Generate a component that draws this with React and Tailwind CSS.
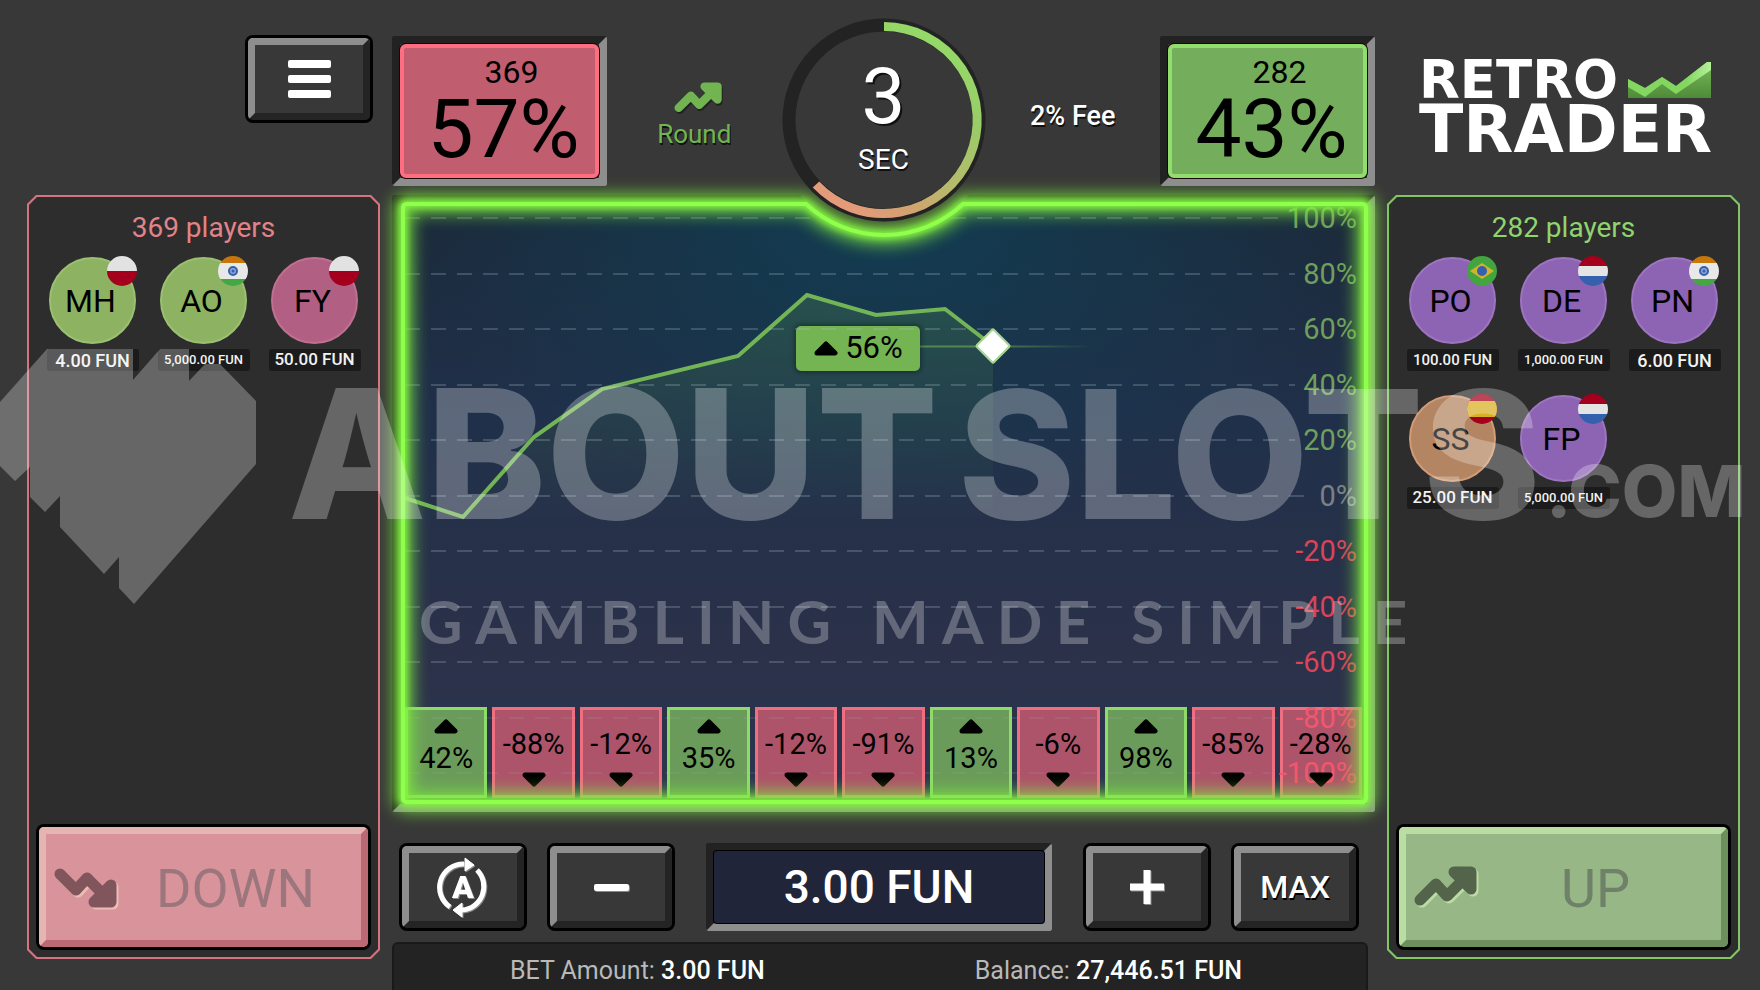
import { useId } from "react";

const DOWN_PLAYERS = [
  { initials: "MH", bet: "4.00 FUN", flag: "pl", color: "bg-[#8db262] border-[#9cc071]", size: "text-[18px]" },
  { initials: "AO", bet: "5,000.00 FUN", flag: "in", color: "bg-[#8db262] border-[#9cc071]", size: "text-[13px]" },
  { initials: "FY", bet: "50.00 FUN", flag: "pl", color: "bg-[#b16083] border-[#bf7091]", size: "text-[17px]" },
];

const UP_PLAYERS = [
  { initials: "PO", bet: "100.00 FUN", flag: "br", color: "bg-[#8d63b3] border-[#9d74c0]", size: "text-[15px]" },
  { initials: "DE", bet: "1,000.00 FUN", flag: "nl", color: "bg-[#8d63b3] border-[#9d74c0]", size: "text-[13px]" },
  { initials: "PN", bet: "6.00 FUN", flag: "in", color: "bg-[#8d63b3] border-[#9d74c0]", size: "text-[18px]" },
  { initials: "SS", bet: "25.00 FUN", flag: "es", color: "bg-[#b38562] border-[#d09b76]", size: "text-[17px]" },
  { initials: "FP", bet: "5,000.00 FUN", flag: "nl", color: "bg-[#8d63b3] border-[#9d74c0]", size: "text-[13px]" },
];

const HISTORY = [42, -88, -12, 35, -12, -91, 13, -6, 98, -85, -28];

const AXIS = [100, 80, 60, 40, 20, 0, -20, -40, -60, -80, -100];

const KEY =
  "m-[3px] flex h-[82px] w-[122px] shrink-0 items-center justify-center rounded-[5px] border-[7px] border-t-[#8e8e8e] border-r-[#242424] border-b-[#242424] border-l-[#8e8e8e] bg-[#383838] shadow-[0_0_0_3px_#000]";

const FRAME = "border-8 border-t-[#222222] border-r-[#8e8e8e] border-b-[#8e8e8e] border-l-[#222222]";

function Flag({ code }) {
  const id = useId();
  return (
    <svg viewBox="0 0 30 30" className="absolute -top-[3px] -right-[3px] size-[30px]" aria-hidden="true">
      <clipPath id={id}>
        <circle cx="15" cy="15" r="15" />
      </clipPath>
      <g clipPath={`url(#${id})`}>
        {code === "pl" && (
          <>
            <rect width="30" height="15" fill="#e2e2e2" />
            <rect y="15" width="30" height="15" fill="#a4001d" />
          </>
        )}
        {code === "nl" && (
          <>
            <rect width="30" height="10" fill="#a4001d" />
            <rect y="10" width="30" height="10" fill="#e4e4e4" />
            <rect y="20" width="30" height="10" fill="#3560ad" />
          </>
        )}
        {code === "in" && (
          <>
            <rect width="30" height="7" fill="#c7760c" />
            <rect y="7" width="30" height="16" fill="#e8e8e8" />
            <rect y="23" width="30" height="7" fill="#43a843" />
            <circle cx="15" cy="15" r="4" fill="#8aa5d6" stroke="#3560ad" strokeWidth="2" />
            <circle cx="15" cy="15" r="1.5" fill="#3560ad" />
          </>
        )}
        {code === "br" && (
          <>
            <rect width="30" height="30" fill="#43a53f" />
            <path d="M3 15 15 7l12 8-12 8z" fill="#d3b32c" />
            <circle cx="15" cy="15" r="5" fill="#3560ad" />
          </>
        )}
        {code === "es" && (
          <>
            <rect width="30" height="30" fill="#a4001d" />
            <rect y="7" width="30" height="16" fill="#d8b022" />
          </>
        )}
      </g>
    </svg>
  );
}

function TrendArrow({ className }) {
  return (
    <svg viewBox="0 0 64 42" className={className} fill="none" stroke="currentColor" strokeLinejoin="round" aria-hidden="true">
      <path d="M6 34 22 18 33 30 49 14" strokeWidth="11" strokeLinecap="round" />
      <path d="M40 6H57V23Z" fill="currentColor" strokeWidth="11" />
    </svg>
  );
}

function Triangle({ down, className = "h-[15px] w-6" }) {
  return (
    <svg viewBox="0 0 24 15" className={className} aria-hidden="true">
      <path
        d={down ? "M3 3 12 12 21 3Z" : "M3 12 12 3 21 12Z"}
        fill="black"
        stroke="black"
        strokeWidth="5"
        strokeLinejoin="round"
      />
    </svg>
  );
}

function PlayerPanel({ count, players, up }) {
  return (
    <aside
      className={`mb-[31px] flex p-[2px] [clip-path:polygon(9px_0,calc(100%_-_9px)_0,100%_9px,100%_calc(100%_-_9px),calc(100%_-_9px)_100%,9px_100%,0_calc(100%_-_9px),0_9px)] ${
        up ? "bg-[#83c565]" : "bg-[#d5737f]"
      }`}
    >
      <div className="flex flex-1 flex-col bg-[#2d2d2d] px-[10px] pt-[15px] pb-[10px] [clip-path:polygon(8px_0,calc(100%_-_8px)_0,100%_8px,100%_calc(100%_-_8px),calc(100%_-_8px)_100%,8px_100%,0_calc(100%_-_8px),0_8px)]">
        <h2 className={`text-center text-[28px] leading-8 ${up ? "text-[#8fd46f]" : "text-[#e28389]"}`}>
          {count} players
        </h2>
        <ul className="mt-[13px] -mx-[2px] grid grid-cols-3 gap-y-6">
          {players.map((p) => (
            <li key={p.initials} className="flex flex-col items-center gap-[5px]">
              <div
                className={`relative flex size-[87px] items-center justify-center rounded-full border-2 pr-1 text-[32px] text-black ${p.color}`}
              >
                {p.initials}
                <Flag code={p.flag} />
              </div>
              <span
                className={`flex h-[22px] w-[92px] items-center justify-center rounded-[3px] bg-[#1b1b1b] font-medium whitespace-nowrap text-[#f2f2f2] ${p.size}`}
              >
                {p.bet}
              </span>
            </li>
          ))}
        </ul>
        <button
          type="button"
          className={`mt-auto flex h-[120px] items-center rounded-[5px] border-[7px] px-2 shadow-[0_0_0_3px_#000] ${
            up
              ? "border-t-[#b9dda3] border-r-[#6d8f5b] border-b-[#6d8f5b] border-l-[#b9dda3] bg-[#97b786] text-[#6f8168]"
              : "border-t-[#e5b6b1] border-r-[#bb6a74] border-b-[#bb6a74] border-l-[#e5b6b1] bg-[#d9939a] text-[#9b777d]"
          }`}
        >
          <TrendArrow
            className={
              up
                ? "h-[42px] w-16 text-[#54644b] drop-shadow-[2px_2px_0_#bbdca6]"
                : "h-[42px] w-16 -scale-y-100 text-[#80555c] drop-shadow-[2px_-2px_0_#ecbdb6]"
            }
          />
          <span className="flex-1 pt-1 text-center text-[54px] leading-none">{up ? "UP" : "DOWN"}</span>
        </button>
      </div>
    </aside>
  );
}

function ShareTile({ count, percent, up }) {
  return (
    <div className={`flex h-[150px] rounded-[3px] ${FRAME}`}>
      <div
        className={`flex flex-1 flex-col items-center rounded-[6px] border-4 text-black shadow-[0_0_0_1px_#1a0509] ${
          up ? "border-[#92de6c] bg-[#74ad5b]" : "border-[#ff6d81] bg-[#c05d6f]"
        }`}
      >
        <span className="mt-2 ml-6 text-[32px] leading-8">{count}</span>
        <span className="ml-2 text-[82px] leading-[82px]">{percent}%</span>
      </div>
    </div>
  );
}

function Timer() {
  return (
    <div className="relative mt-[18px] size-[204px]">
      <svg viewBox="0 0 204 204" className="absolute inset-0" fill="none" aria-hidden="true">
        <defs>
          <linearGradient id="timer-arc" gradientUnits="userSpaceOnUse" x1="150" y1="10" x2="50" y2="185">
            <stop offset="0" stopColor="#93db68" />
            <stop offset="0.3" stopColor="#9acc68" />
            <stop offset="0.65" stopColor="#b8b96c" />
            <stop offset="0.85" stopColor="#d3a170" />
            <stop offset="1" stopColor="#e69a7c" />
          </linearGradient>
        </defs>
        <circle cx="102" cy="102" r="95" fill="#383838" stroke="#232323" strokeWidth="13" />
        <path d="M102 8.5A93.5 93.5 0 1 1 34 166.5" stroke="url(#timer-arc)" strokeWidth="9" />
      </svg>
      <div className="relative flex flex-col items-center text-white">
        <span className="mt-10 text-[78px] leading-[78px] [text-shadow:2px_2px_0_#111]">3</span>
        <span className="mt-2 text-[28px] leading-8 [text-shadow:1px_2px_0_#111]">SEC</span>
      </div>
    </div>
  );
}

function Logo() {
  return (
    <div className="ml-[32px] w-[292px] pt-[58px] font-['DejaVu_Sans'] font-bold text-white">
      <div className="flex items-center justify-between">
        <span className="text-[53px] leading-[44px]">RETRO</span>
        <svg viewBox="0 0 83 36" className="h-9 w-[83px] shrink-0" aria-hidden="true">
          <defs>
            <linearGradient id="logo-area" x1="0" y1="0" x2="0" y2="1">
              <stop offset="0" stopColor="#79bd58" />
              <stop offset="1" stopColor="#4f8a3a" />
            </linearGradient>
            <linearGradient id="logo-band" x1="0" y1="0" x2="1" y2="0">
              <stop offset="0.7" stopColor="#83d660" />
              <stop offset="1" stopColor="#b5f09b" />
            </linearGradient>
          </defs>
          <path d="M0 17 17 26 34 15 48 24 79 0H83V36H0Z" fill="url(#logo-area)" />
          <path d="M0 17 17 26 34 15 48 24 79 0H83V8L48 32 34 22 17 35 0 25Z" fill="url(#logo-band)" />
        </svg>
      </div>
      <div className="text-[65px] leading-[56px]">TRADER</div>
    </div>
  );
}

function Chart() {
  return (
    <section className={`relative flex flex-1 flex-col justify-end rounded-[3px] ${FRAME}`}>
      <svg
        viewBox="0 0 983 617"
        preserveAspectRatio="none"
        className="absolute -top-2 -left-2 h-[calc(100%_+_16px)] w-[calc(100%_+_16px)]"
        fill="none"
        aria-hidden="true"
      >
        <defs>
          <linearGradient id="sky" x1="0" y1="0" x2="0" y2="1">
            <stop offset="0" stopColor="#1c2939" />
            <stop offset="0.35" stopColor="#20304a" />
            <stop offset="0.75" stopColor="#2b3149" />
            <stop offset="1" stopColor="#2b3650" />
          </linearGradient>
          <radialGradient id="haze" cx="0.5" cy="0.02" r="0.5">
            <stop offset="0" stopColor="#123d53" />
            <stop offset="1" stopColor="#123d53" stopOpacity="0" />
          </radialGradient>
          <linearGradient id="area" x1="0" y1="0" x2="0" y2="1">
            <stop offset="0" stopColor="#6fb44d" stopOpacity="0.2" />
            <stop offset="1" stopColor="#6fb44d" stopOpacity="0" />
          </linearGradient>
          <linearGradient id="level" gradientUnits="userSpaceOnUse" x1="528" y1="0" x2="700" y2="0">
            <stop offset="0.4" stopColor="#6fb44d" stopOpacity="0.6" />
            <stop offset="1" stopColor="#6fb44d" stopOpacity="0" />
          </linearGradient>
        </defs>
        <rect x="8" y="8" width="967" height="601" fill="url(#sky)" />
        <rect x="8" y="8" width="967" height="601" fill="url(#haze)" />
        <path
          d="M13 303 71 322 142 242 210 194 346 161 415 100 484 120 553 114 601 151V330H13Z"
          fill="url(#area)"
        />
        <path d="M528 151.500H700" stroke="url(#level)" strokeWidth="2" />
        <path d="M13 303 71 322 142 242 210 194 346 161 415 100 484 120 553 114 601 151" stroke="#73b556" strokeWidth="4" />
        <path d="M601 136 616 151 601 166 586 151Z" fill="white" stroke="#a9d694" strokeWidth="5" strokeLinejoin="round" />
        <path d="M601 137 615 151 601 165 587 151Z" fill="white" stroke="white" strokeWidth="2" strokeLinejoin="round" />
      </svg>

      <div className="absolute top-[123px] left-[41%] flex h-[45px] w-[124px] items-center justify-center gap-[7px] rounded-[5px] bg-[#74b452] text-[31px] text-black shadow-[0_0_4px_2px_rgba(0,0,0,0.3)]">
        <Triangle />
        56%
      </div>

      <ol className="flex gap-[5px] px-[5px] pb-[6px] text-[29px] leading-7 text-black">
        {HISTORY.map((value, i) => (
          <li
            key={i}
            className={
              value > 0
                ? "relative flex h-[91px] flex-1 flex-col items-center gap-[10px] border-[3px] border-[#8edb6a] bg-[#6a9b5a] pt-[9px]"
                : "relative flex h-[91px] flex-1 flex-col-reverse items-center gap-[14px] border-[3px] border-[#ee7080] bg-[#ad546a] pb-[8px]"
            }
          >
            <Triangle down={value < 0} className="relative z-20 h-[15px] w-6 shrink-0" />
            <span className="relative z-20">{value}%</span>
          </li>
        ))}
      </ol>

      <div className="pointer-events-none absolute inset-x-[5px] top-px bottom-[17px] z-10 flex flex-col justify-between pr-[5px]">
        {AXIS.map((tick) => (
          <div key={tick} className="flex h-7 items-center gap-2 text-[29px] leading-7">
            <div
              className={
                tick < -60
                  ? "h-[2px] flex-1 bg-[repeating-linear-gradient(90deg,rgba(170,190,200,0.1)_0_15px,transparent_15px_26px)]"
                  : "h-[2px] flex-1 bg-[repeating-linear-gradient(90deg,rgba(170,190,200,0.25)_0_15px,transparent_15px_26px)]"
              }
            />
            <span
              className={
                tick > 0
                  ? "text-[#6f9f5c]"
                  : tick === 0
                    ? "text-[#7b8088]"
                    : tick < -60
                      ? "text-[#f4566a]"
                      : "text-[#d94459]"
              }
            >
              {tick}%
            </span>
          </div>
        ))}
      </div>

      {/* neon outline, dips under the timer */}
      <svg
        viewBox="0 0 983 617"
        preserveAspectRatio="none"
        className="pointer-events-none absolute -top-2 -left-2 z-20 h-[calc(100%_+_16px)] w-[calc(100%_+_16px)] overflow-visible"
        fill="none"
        aria-hidden="true"
      >
        <defs>
          <filter id="glow-wide" filterUnits="userSpaceOnUse" x="-40" y="-40" width="1063" height="697">
            <feGaussianBlur stdDeviation="8" />
          </filter>
          <filter id="glow-tight" filterUnits="userSpaceOnUse" x="-40" y="-40" width="1063" height="697">
            <feGaussianBlur stdDeviation="3" />
          </filter>
          <path id="neon" d="M15 9H414A115 115 0 0 0 571 9H970Q974 9 974 13V603Q974 607 970 607H15Q11 607 11 603V13Q11 9 15 9Z" />
        </defs>
        <path d="M408 -1H577L571 9A115 115 0 0 1 414 9Z" fill="#383838" />
        <use href="#neon" stroke="#7be83c" strokeWidth="20" filter="url(#glow-wide)" opacity="0.8" />
        <use href="#neon" stroke="#86f542" strokeWidth="8" filter="url(#glow-tight)" />
        <use href="#neon" stroke="#8eff4a" strokeWidth="4" />
      </svg>
    </section>
  );
}

function AutoIcon() {
  return (
    <svg viewBox="0 0 52 60" className="h-[60px] w-[52px] drop-shadow-[1px_1px_0_#888]" fill="none" stroke="white" aria-hidden="true">
      <path d="M13 50A23.500 23.500 0 0 1 27 7" strokeWidth="5" />
      <path d="M40 13A23.500 23.500 0 0 1 25 53" strokeWidth="5" />
      <path d="M28 1 37 8 28 14Z" fill="white" strokeWidth="1" />
      <path d="M25 46 16 53 25 60Z" fill="white" strokeWidth="1" />
      <text x="26" y="41" textAnchor="middle" fill="white" stroke="none" fontSize="32" fontWeight="900" fontFamily="Roboto, sans-serif">
        A
      </text>
    </svg>
  );
}

function Controls() {
  return (
    <div className="mt-[31px] flex gap-5 pr-4 pl-[7px]">
      <button type="button" aria-label="Autoplay" className={KEY}>
        <AutoIcon />
      </button>
      <button type="button" aria-label="Decrease bet" className={KEY}>
        <span className="h-[7px] w-[35px] rounded-[2px] bg-white shadow-[1px_1px_0_#888]" />
      </button>
      <div className={`mx-[11px] flex h-[88px] min-w-0 flex-1 rounded-[3px] ${FRAME}`}>
        <input
          aria-label="Bet amount"
          defaultValue="3.00 FUN"
          className="w-full min-w-0 rounded-[3px] bg-[#20253a] text-center text-[46px] leading-none font-medium text-white shadow-[0_0_0_1px_#000] outline-none"
        />
      </div>
      <button type="button" aria-label="Increase bet" className={KEY}>
        <svg viewBox="0 0 36 36" className="size-9 drop-shadow-[1px_1px_0_#888]" stroke="white" strokeWidth="7" aria-hidden="true">
          <path d="M18 1V35M1 18H35" />
        </svg>
      </button>
      <button type="button" className={`${KEY} text-[32px] font-medium text-white [text-shadow:1px_2px_0_#000]`}>
        MAX
      </button>
    </div>
  );
}

function Watermark() {
  return (
    <svg
      viewBox="0 0 1760 990"
      className="pointer-events-none absolute inset-0 z-50 size-full opacity-[0.27]"
      fill="white"
      aria-hidden="true"
    >
      <path d="M0 402 47 349H133V380L160 349H189V381L205 364H220L256 401V464L134 604 119 588V557L104 574 60 527V496L45 512 30 497V467L15 481 0 466Z" />
      <g fontFamily="Inter, sans-serif" fontWeight="800">
        <text x="288" y="519" fontSize="180">ABOUT</text>
        <text x="958" y="519" fontSize="178">SLOTS</text>
        <text x="1546" y="517" fontSize="72">.COM</text>
      </g>
      <text x="419" y="644" fontSize="60" fontWeight="700" fontFamily="Lato, sans-serif" className="tracking-[0.22em]">
        GAMBLING MADE SIMPLE
      </text>
    </svg>
  );
}

export default function App() {
  return (
    <div className="relative flex min-h-screen flex-col overflow-hidden bg-[#383838] font-[Roboto,sans-serif]">
      <header className="relative z-40 grid h-[195px] grid-cols-[353px_minmax(0,1fr)_353px] gap-x-3 pr-5 pl-[27px]">
        <div className="flex justify-end pt-[35px] pr-[7px]">
          <button type="button" aria-label="Menu" className={`${KEY} flex-col gap-[7px]`}>
            <span className="h-2 w-[43px] rounded-[2px] bg-white" />
            <span className="h-2 w-[43px] rounded-[2px] bg-white" />
            <span className="h-2 w-[43px] rounded-[2px] bg-white" />
          </button>
        </div>
        <div className="grid grid-cols-[215px_1fr_204px_1fr_215px] items-start">
          <div className="pt-9">
            <ShareTile count={369} percent={57} />
          </div>
          <div className="flex flex-col items-center pt-[82px] text-[26px] leading-8 text-[#72b452] [text-shadow:1px_2px_0_#111]">
            <TrendArrow className="ml-2 h-[32px] w-[49px] drop-shadow-[1px_2px_0_#222]" />
            <span className="mt-1">Round</span>
          </div>
          <Timer />
          <div className="pt-[100px] text-center text-[27px] leading-8 font-medium text-white [text-shadow:1px_2px_0_#111]">
            2% Fee
          </div>
          <div className="pt-9">
            <ShareTile count={282} percent={43} up />
          </div>
        </div>
        <Logo />
      </header>

      <main className="grid flex-1 grid-cols-[353px_minmax(0,1fr)_353px] gap-x-3 pr-5 pl-[27px]">
        <PlayerPanel count={369} players={DOWN_PLAYERS} />
        <div className="flex flex-col">
          <Chart />
          <Controls />
          <footer className="mt-[11px] mr-[7px] flex h-12 items-center justify-center gap-[210px] rounded-t-[6px] border-2 border-b-0 border-[#191919] bg-[#232323] pt-2 pr-2 text-[25px] text-[#b9b9b9]">
            <span>
              BET Amount: <span className="font-medium text-white">3.00 FUN</span>
            </span>
            <span>
              Balance: <span className="font-medium text-white">27,446.51 FUN</span>
            </span>
          </footer>
        </div>
        <PlayerPanel count={282} players={UP_PLAYERS} up />
      </main>

      <Watermark />
    </div>
  );
}
